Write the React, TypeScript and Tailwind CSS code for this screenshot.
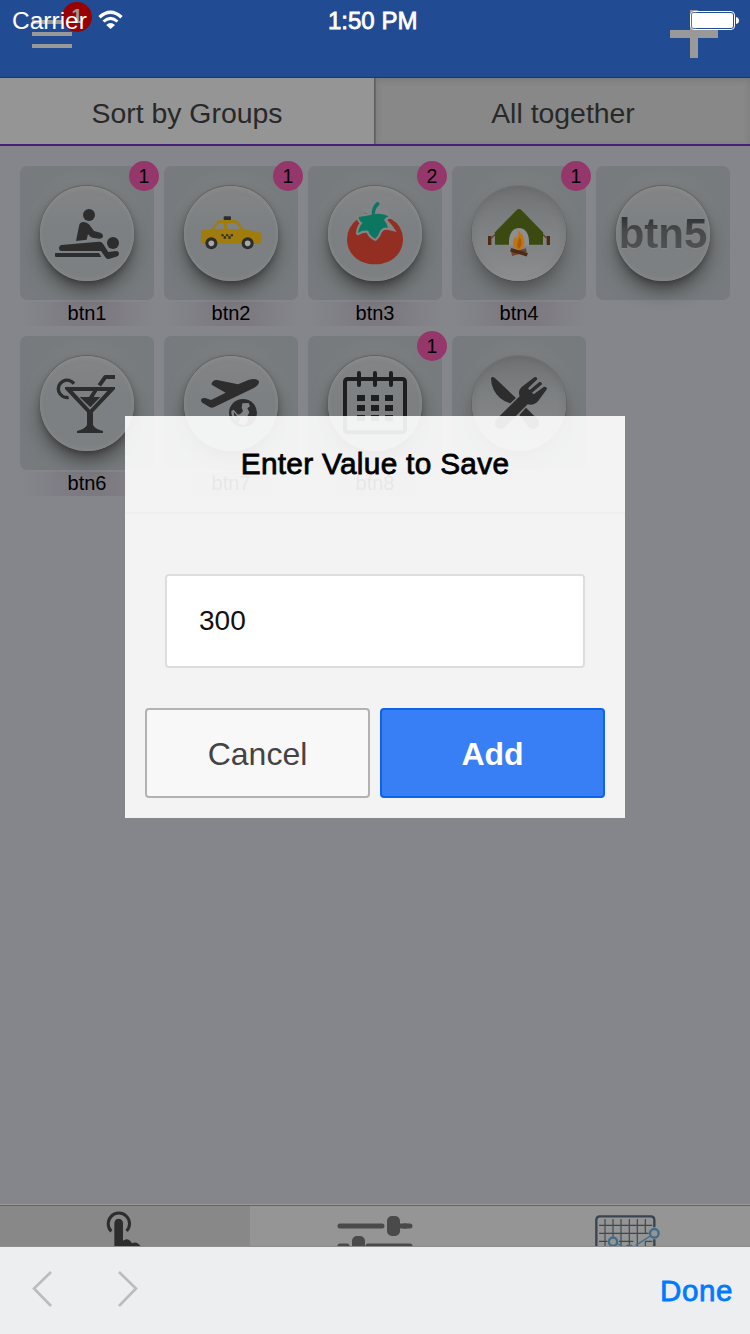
import type { ReactNode } from "react";

const INK = "#2d2d2d";

const MassageIcon = () => (
  <g fill={INK}>
    <circle cx="237" cy="180" r="18" />
    <circle cx="309" cy="264" r="18" />
    <path d="M207 214Q208 202 219 201Q230 200 238 209L252 228L271 233Q279 235 279 243Q278 251 268 251L247 248Q241 247 237 241L234 237L230 254L198 258Z" />
    <path d="M154 270L266 260Q275 259 279 266L295 291L318 288Q327 288 327 297Q326 303 319 305L296 312Q289 313 286 307L273 288H155Q147 288 147 279Q147 271 154 270Z" />
    <path d="M137 294H267L274 306H138Q135 306 135 303V296Q135 294 137 294Z" />
  </g>
);

const TaxiIcon = () => (
  <g>
    <rect x="641" y="184" width="22" height="12" rx="3" fill={INK} />
    <path d="M573 234Q573 226 581 225L603 223L622 199Q626 195 633 195H673Q679 195 684 200L702 223L746 231Q754 233 754 239V258Q753 266 745 266H582Q573 265 573 256Z" fill="#a07c0f" />
    <path d="M612 222L628 205H642V222ZM652 205H674Q677 205 680 208L691 222H652Z" fill="#7f8283" />
    <g fill={INK}>
      <path d="M634 238h7v6h-7zM648 238h7v6h-7zM662 238h7v6h-7zM641 244h7v7h-7zM655 244h7v7h-7z" />
      <circle cx="604" cy="265" r="18" />
      <circle cx="713" cy="265" r="18" />
    </g>
    <circle cx="604" cy="265" r="8.5" fill="#a9a9a3" />
    <circle cx="713" cy="265" r="8.5" fill="#a9a9a3" />
  </g>
);

const TOMATO_LEAF =
  "M215 179Q214 157 228 143Q234 138 238 144Q240 149 234 154Q225 163 225 177Q248 173 266 184Q256 187 252 195Q261 204 264 218Q248 216 240 228Q237 241 226 251Q208 243 205 227Q186 225 174 234Q176 215 188 204Q176 197 176 186Q196 183 215 179Z";

const TomatoIcon = () => (
  <g>
    <path d="M172 193Q142 216 141 252C141 299 179 328 225 328C271 328 309 299 309 252Q308 211 272 191L262 193L240 172H200Z" fill="#932e23" />
    <path d="M180 160H262L272 187L262 195Q276 208 290 231L262 224Z" fill="#828486" />
    <path d={TOMATO_LEAF} fill="#828486" stroke="#828486" strokeWidth="13" strokeLinejoin="round" />
    <path d={TOMATO_LEAF} fill="#0c7661" />
  </g>
);

const TentIcon = () => (
  <g>
    <path d="M574 249L588 236M740 249L726 236" stroke="#6a4120" strokeWidth="4" />
    <path d="M564 243h10v27h-10zM740 243h10v27h-10z" fill="#4b2b12" />
    <path d="M650 165Q657 159 664 165L729 232V269H585V232Z" fill="#3a4a10" />
    <path d="M627 272V257C628 232 641 219 657 219S686 232 687 257V272Z" fill="#8d8e90" />
    <path d="M654 226Q674 243 673 263Q670 281 656 284Q639 279 639 263Q640 251 647 244Q651 248 650 254Q657 242 654 226Z" fill="#bf7410" />
    <path d="M659 246Q671 265 657 282Q645 274 659 246Z" fill="#a65c08" />
    <path d="M635 298L679 285" stroke="#70442a" strokeWidth="11" />
    <path d="M632 284L682 299" stroke="#4b2b16" strokeWidth="11" />
  </g>
);

const CocktailIcon = () => (
  <g>
    <path d="M192 176A26 26 0 1 0 176 217" fill="none" stroke={INK} strokeWidth="10" />
    <path d="M268 181L286 156H315" fill="none" stroke={INK} strokeWidth="12" strokeLinejoin="round" />
    <path fillRule="evenodd" d="M165 186H315V192L249 262V299Q252 310 279 318V324H201V318Q228 310 231 299V262L165 192ZM188 198L240 254L292 198Z" fill={INK} />
    <path d="M209 216H237L249 198H262L251 216H271L241 247Z" fill={INK} />
  </g>
);

const PlaneIcon = () => (
  <g>
    <path d="M610 168Q613 164 621 165L684 178L717 164Q742 158 747 170Q748 178 733 188L613 246Q605 250 598 246L577 233Q571 228 574 222Q579 218 588 220L603 225L647 203L606 180Q602 175 610 168Z" fill={INK} />
    <circle cx="699" cy="264" r="42" fill={INK} />
    <path d="M697 235L716 234L720 244L712 250L718 262L712 274L714 290L701 302L684 294L690 281L683 276L672 261Q670 272 682 289Q662 278 664 258L671 254L684 269L692 266L699 258L695 249Z" fill="#828486" />
  </g>
);

const CalendarIcon = () => (
  <g>
    <rect x="135" y="162" width="180" height="160" rx="8" fill="none" stroke="#1e1e1e" strokeWidth="12" />
    <path d="M177 144V180M225 144V180M273 144V180" stroke="#1e1e1e" strokeWidth="12" strokeLinecap="round" />
    <path d="M171 210h24v18h-24zM213 210h24v18h-24zM255 210h24v18h-24zM171 240h24v18h-24zM213 240h24v18h-24zM255 240h24v18h-24zM171 270h24v18h-24zM213 270h24v18h-24zM255 270h24v18h-24z" fill="#1e1e1e" />
  </g>
);

const CutleryIcon = () => (
  <g fill={INK}>
    <path d="M573 160Q576 153 584 158L648 219L631 235Q596 225 581 194Q573 178 573 160Z" />
    <path d="M678 248L713 283Q722 295 712 307Q700 317 687 307L658 270Z" />
    <path d="M659 214Q653 198 664 187L704 156Q712 155 712 163L684 190L689 195L718 171Q727 170 726 178L696 203L701 208L732 185Q741 184 741 192L714 229Q701 243 683 238L614 307Q602 317 589 306Q580 294 590 282Z" />
  </g>
);

type Item = { label?: string; badge?: string; pressed?: boolean; viewBox?: string; icon?: ReactNode; text?: string };

const items: Item[] = [
  { label: "btn1", badge: "1", viewBox: "30 33 402 402", icon: <MassageIcon /> },
  { label: "btn2", badge: "1", viewBox: "462 33 402 402", icon: <TaxiIcon /> },
  { label: "btn3", badge: "2", viewBox: "24 33 402 402", icon: <TomatoIcon /> },
  { label: "btn4", badge: "1", pressed: true, viewBox: "456 33 402 402", icon: <TentIcon /> },
  { text: "btn5" },
  { label: "btn6", viewBox: "30 33 402 402", icon: <CocktailIcon /> },
  { label: "btn7", viewBox: "462 33 402 402", icon: <PlaneIcon /> },
  { label: "btn8", badge: "1", viewBox: "24 33 402 402", icon: <CalendarIcon /> },
  { pressed: true, viewBox: "456 33 402 402", icon: <CutleryIcon /> },
];

function Tile({ item }: { item: Item }) {
  return (
    <div className="flex h-[160px] flex-col">
      <div className="relative flex h-[134px] shrink-0 items-center justify-center rounded-[7px] bg-[radial-gradient(circle_at_50%_48%,#838485_0,#808284_42%,#777b7d_66%)]">
        <div
          className={
            item.pressed
              ? "h-[95px] w-[94px] rounded-full bg-[linear-gradient(#707173,#7d8082_40%,#858687_75%,#8e8f90)] shadow-[0_10px_20px_-3px_rgba(30,30,32,0.6),inset_0_2px_7px_rgba(90,90,90,0.35),inset_0_-2px_3px_rgba(160,160,160,0.3),0_0_0_1px_rgba(105,105,107,0.5)]"
              : "h-[95px] w-[94px] rounded-full bg-[linear-gradient(#838486,#7c8082_50%,#7d8082)] shadow-[0_10px_20px_-3px_rgba(25,25,27,0.75),0_3px_6px_-1px_rgba(40,40,40,0.35),inset_0_2px_4px_rgba(150,150,150,0.45),inset_0_-3px_4px_rgba(150,150,150,0.25),0_-1px_1px_rgba(80,80,80,0.5)]"
          }
        />
        {item.icon && (
          <svg className="absolute inset-0 h-[134px] w-[134px]" viewBox={item.viewBox}>
            {item.icon}
          </svg>
        )}
        {item.text && (
          <span className="absolute inset-0 flex items-center justify-center bg-[linear-gradient(#303132_38%,#47494a_48%,#4f5152_62%)] bg-clip-text pt-px text-[42px] font-bold text-transparent drop-shadow-[0_1px_0_#858688]">
            {item.text}
          </span>
        )}
        {item.badge && (
          <span className="absolute -top-[5px] -right-[5px] flex h-[30px] w-[30px] items-center justify-center rounded-full bg-[#96376c] pt-[2px] text-[19.5px] leading-none text-black">
            {item.badge}
          </span>
        )}
      </div>
      {item.label && (
        <div className="mt-[2px] h-[24px] bg-[linear-gradient(90deg,#84868c_0%,#7d7a82_40%,#7c797f_60%,#84868c_100%)] text-center text-[20px] leading-[23px] text-black">
          {item.label}
        </div>
      )}
    </div>
  );
}

export default function App() {
  return (
    <div className="relative flex h-[1334px] w-[750px] flex-col overflow-hidden bg-[#84868c] font-['Liberation_Sans',Arial,sans-serif]">
      <header className="flex h-[78px] shrink-0 items-start justify-between border-b border-[#063a8d] bg-[#214b92] pr-8 pl-8">
        <div className="relative flex flex-col gap-2 pt-5">
          <span className="h-1 w-10 bg-[#999]" />
          <span className="h-1 w-10 bg-[#999]" />
          <span className="h-1 w-10 bg-[#999]" />
          <span className="absolute top-[2px] left-[30px] flex h-[30px] w-[30px] items-center justify-center rounded-full bg-[#990000] pb-[3px] text-[20px] font-bold text-[#999]">
            1
          </span>
        </div>
        <svg className="mt-[10px] h-12 w-12" viewBox="0 0 48 48">
          <path d="M20 0h8v20h20v8H28v20h-8V28H0v-8h20z" fill="#999" />
        </svg>
      </header>

      <div className="absolute inset-x-0 top-0 h-10 text-white">
        <span className="absolute top-[7px] left-[12px] text-[24.5px] leading-[28px]">Carrier</span>
        <svg className="absolute top-[10px] left-[98px] h-[20px] w-[26px]" viewBox="0 0 26 20">
          <path d="M1.500 7.200Q12.500-2.800 23.500 7.200" fill="none" stroke="#fff" strokeWidth="3.400" />
          <path d="M5.500 11.500Q12.500 5.200 19.500 11.500" fill="none" stroke="#fff" strokeWidth="3" />
          <path d="M8.200 15Q12.500 11.200 17 15L12.600 19Z" fill="#fff" />
        </svg>
        <span className="absolute top-[7px] left-[328px] text-[24px] leading-[28px] whitespace-nowrap [-webkit-text-stroke:0.8px_white]">
          1:50 PM
        </span>
        <svg className="absolute top-[10px] left-[689px] h-[21px] w-[52px]" viewBox="0 0 52 21">
          <rect x="1.500" y="1.500" width="44" height="18" rx="3.500" fill="#214b92" stroke="#fff" />
          <path d="M2.500 2.500h5v16h-5z" fill="#999" />
          <rect x="3" y="3" width="41" height="15" rx="2" fill="#fff" />
          <path d="M47 7q3 .5 3 3.500t-3 3.500z" fill="#fff" />
        </svg>
      </div>

      <div className="flex h-[68px] shrink-0 border-b-2 border-[#44207a] text-[28.4px] text-[#282828]">
        <div className="flex flex-1 items-center justify-center border-r border-[#5d5d5d] bg-[#959595] pt-[4px]">
          <span>Sort by Groups</span>
        </div>
        <div className="flex flex-1 items-center justify-center border-l border-[#696969] bg-[#888] pt-[4px] shadow-[inset_0_2px_6px_rgba(60,60,60,0.2)]">
          <span>All together</span>
        </div>
      </div>

      <main className="flex-1 px-5 pt-5">
        <div className="grid grid-cols-[repeat(5,134px)] gap-[10px]">
          {items.map((item, i) => (
            <Tile key={i} item={item} />
          ))}
        </div>
      </main>

      <nav className="flex h-[130px] shrink-0 border-t border-[#9a9a9b]">
        <div className="flex w-[250px] justify-center border-t border-[#626365] bg-[#888]">
          <svg className="h-[60px] w-[250px]" viewBox="0 48 750 180">
            <path d="M334 124A32 32 0 1 1 380 123" fill="none" stroke={INK} strokeWidth="9" />
            <path d="M343 190V100a13 14 0 0 1 26 0V152Q384 140 396 160Q412 152 424 172V200H343Z" fill={INK} />
          </svg>
        </div>
        <div className="flex w-[250px] justify-center border-t border-[#626365] bg-[#959595]">
          <svg className="h-[60px] w-[250px]" viewBox="0 0 250 60">
            <path d="M90 20H132M154 20H160M90 40H97M118 40H160" stroke="#4a4a4a" strokeWidth="5" strokeLinecap="round" />
            <rect x="137" y="10" width="13" height="20" rx="5" fill="#4a4a4a" />
            <path d="M150 20H157" stroke="#4a4a4a" strokeWidth="5" />
            <rect x="102" y="30" width="13" height="20" rx="5" fill="#4a4a4a" />
          </svg>
        </div>
        <div className="flex w-[250px] justify-center border-t border-[#626365] bg-[#959595]">
          <svg className="h-[60px] w-[250px]" viewBox="375 48 750 180">
            <path d="M664 200V90Q664 79 675 79H827Q838 79 838 90V112M838 148V200" fill="none" stroke="#384550" strokeWidth="7" />
            <path d="M690 87V200M714 87V140M738 87V200M763 87V200M787 87V200M811 87V130M672 106H832M672 130H821M672 154H697M732 154H775M811 154H832M811 154V200" fill="none" stroke="#3d4852" strokeWidth="3.500" />
            <path d="M728 162L742 168M782 166L826 138" stroke="#426b87" strokeWidth="4" />
            <circle cx="714" cy="155" r="12.500" fill="#959595" stroke="#426b87" strokeWidth="7" />
            <circle cx="838" cy="130" r="13" fill="#959595" stroke="#426b87" strokeWidth="7" />
            <circle cx="763" cy="179" r="12.500" fill="#959595" stroke="#426b87" strokeWidth="7" />
          </svg>
        </div>
      </nav>

      <div className="absolute top-[416px] left-[125px] flex h-[402px] w-[500px] flex-col bg-[#fefefe]/91">
        <h3 className="flex h-[98px] shrink-0 items-center justify-center border-b-2 border-[#eeeeee] text-[29.8px] tracking-[0.3px] whitespace-nowrap text-black [-webkit-text-stroke:0.8px_black]">
          Enter Value to Save
        </h3>
        <div className="mx-10 mt-[60px] flex h-[94px] shrink-0 items-center rounded-[4px] border-2 border-[#ddd] bg-white px-8 text-[28px] text-[#111]">
          300
        </div>
        <div className="mt-10 flex gap-[10px] px-5">
          <button className="h-[90px] flex-1 rounded-[4px] border-2 border-[#b2b2b2] bg-[#f8f8f8] pt-[2px] text-[32px] text-[#444]">Cancel</button>
          <button className="h-[90px] flex-1 rounded-[4px] border-2 border-[#0c63ee] bg-[#387ef5] pt-[2px] text-[32px] font-bold text-white">Add</button>
        </div>
      </div>

      <div className="absolute inset-x-0 bottom-0 flex h-[88px] items-center border-t border-[#8c8c8e] bg-[#edeef0] pt-[2px] pr-[17px] pl-[31px]">
        <svg className="-mt-[5px] h-[38px] w-[110px]" viewBox="0 0 110 38">
          <path d="M20 2L3 18.500L20 36M88 2L105 18.500L88 36" fill="none" stroke="#bbbcbd" strokeWidth="2.600" />
        </svg>
        <span className="ml-auto text-[29.5px] tracking-[0.6px] text-[#007aff] [-webkit-text-stroke:0.8px_#007aff]">Done</span>
      </div>
    </div>
  );
}
